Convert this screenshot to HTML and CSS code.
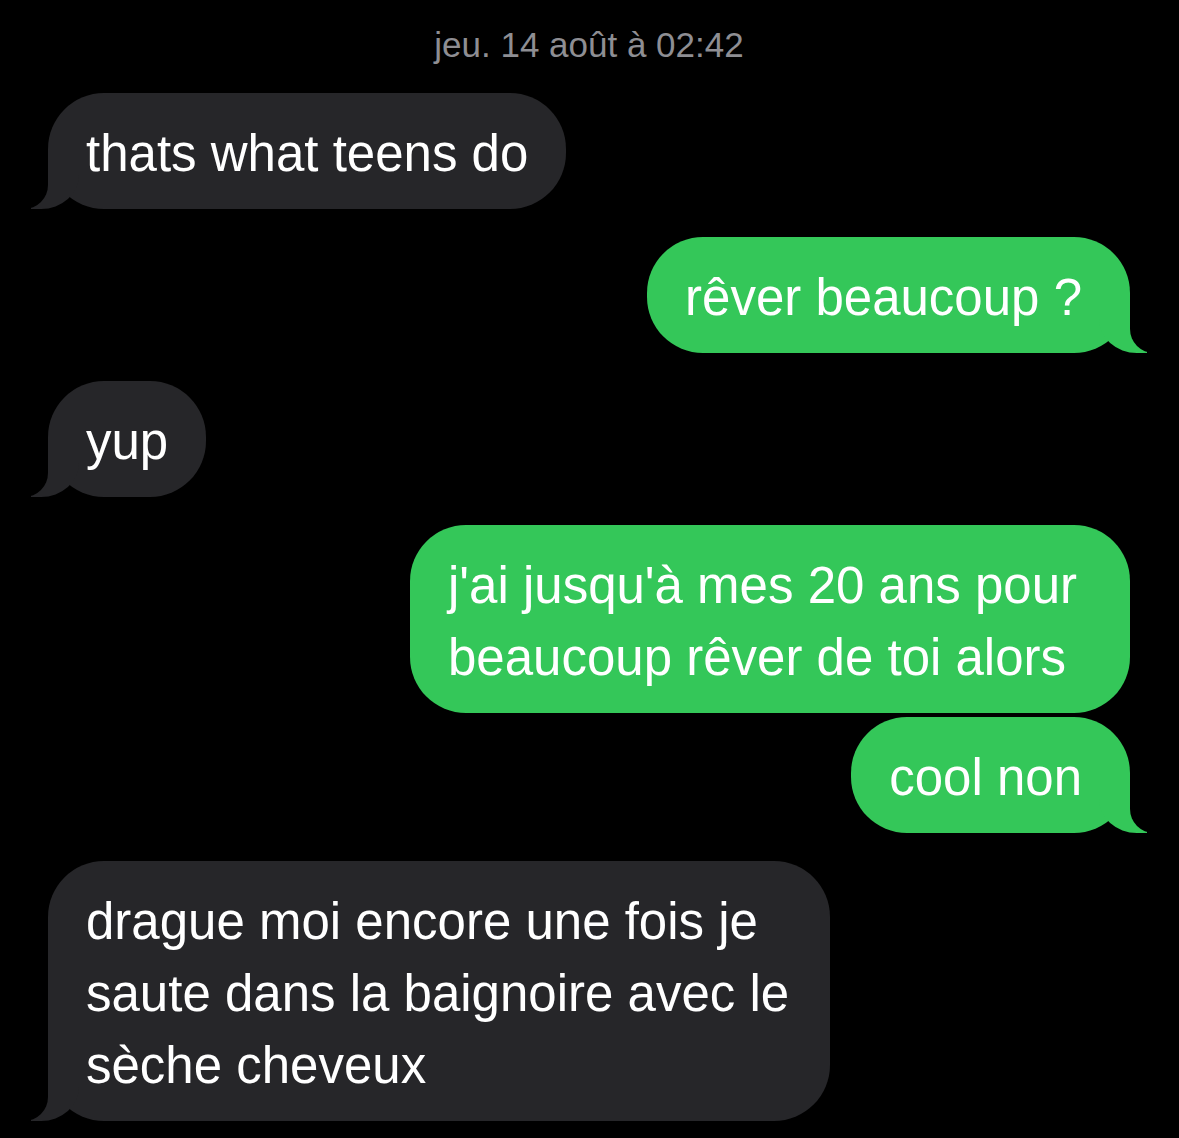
FILE: index.html
```html
<!DOCTYPE html>
<html lang="fr">
<head>
  <meta charset="UTF-8">
  <meta name="viewport" content="width=device-width, initial-scale=1.0">
  <title>Messages</title>
  <link rel="stylesheet" href="styles.css">
</head>
<body>

  <!-- Conversation -->
  <div class="thread">
    <div class="stamp">jeu. 14 août à 02:42</div>

    <div class="bubble in tail">thats what teens do</div>
    <div class="bubble out tail">rêver beaucoup ?</div>
    <div class="bubble in tail">yup</div>
    <div class="bubble out">j'ai jusqu'à mes 20 ans pour beaucoup rêver de toi alors</div>
    <div class="bubble out tail next">cool non</div>
    <div class="bubble in tail">drague moi encore une fois je saute dans la baignoire avec le sèche cheveux</div>
  </div>

</body>
</html>
```

FILE: styles.css
```css
html {
  background-color: #000;
}

body {
  margin: 0;
  background-color: #000;
  font-family: 'Liberation Sans', Arial, sans-serif;
  color: #fff;
}

.thread {
  display: flex;
  flex-direction: column;
  padding: 25px 49px 17px 48px;
}

.stamp {
  align-self: center;
  font-size: 35px;
  line-height: 40px;
  color: #8e8e93;
}

.bubble {
  position: relative;
  box-sizing: border-box;
  margin-top: 28px;
  padding: 25px 38px 19px;
  font-size: 51px;
  line-height: 72px;
  border-radius: 56px;
}

.bubble.next {
  margin-top: 4px;
}

.in {
  align-self: flex-start;
  max-width: 782px;
  background-color: #262629;
}

.out {
  align-self: flex-end;
  max-width: 720px;
  background-color: #34c759;
  padding-right: 48px;
}

/* tails */
.tail::before,
.tail::after {
  content: "";
  position: absolute;
  bottom: 0;
  height: 60px;
}

.out.tail::before {
  right: -17px;
  width: 48px;
  background-color: #34c759;
  border-bottom-left-radius: 38px 34px;
}

.out.tail::after {
  right: -62px;
  width: 62px;
  background-color: #000;
  border-bottom-left-radius: 24px;
}

.in.tail::before {
  left: -17px;
  width: 48px;
  background-color: #262629;
  border-bottom-right-radius: 38px 34px;
}

.in.tail::after {
  left: -62px;
  width: 62px;
  background-color: #000;
  border-bottom-right-radius: 24px;
}
```
